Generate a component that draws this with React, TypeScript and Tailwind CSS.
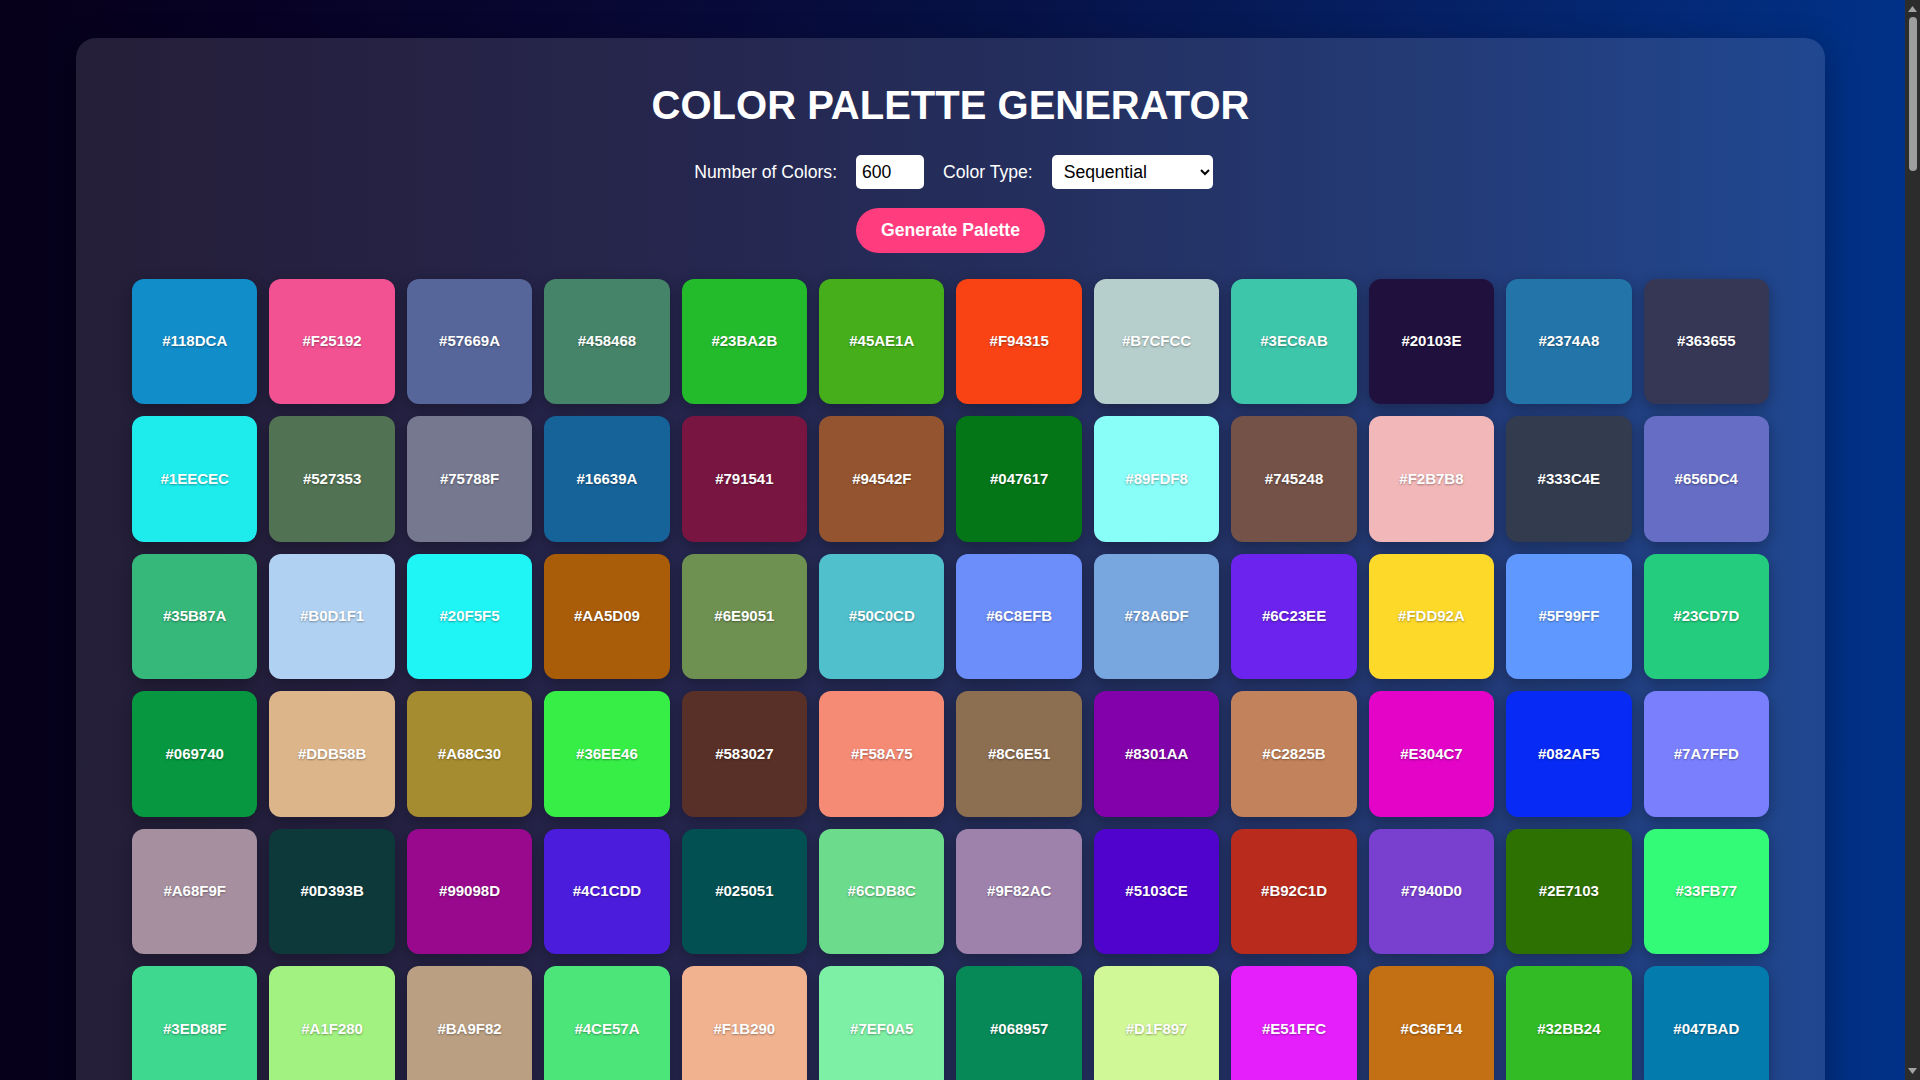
import { useState } from "react";

const shown = [
  "118DCA", "F25192", "57669A", "458468", "23BA2B", "45AE1A", "F94315", "B7CFCC", "3EC6AB", "20103E", "2374A8", "363655",
  "1EECEC", "527353", "75788F", "16639A", "791541", "94542F", "047617", "89FDF8", "745248", "F2B7B8", "333C4E", "656DC4",
  "35B87A", "B0D1F1", "20F5F5", "AA5D09", "6E9051", "50C0CD", "6C8EFB", "78A6DF", "6C23EE", "FDD92A", "5F99FF", "23CD7D",
  "069740", "DDB58B", "A68C30", "36EE46", "583027", "F58A75", "8C6E51", "8301AA", "C2825B", "E304C7", "082AF5", "7A7FFD",
  "A68F9F", "0D393B", "99098D", "4C1CDD", "025051", "6CDB8C", "9F82AC", "5103CE", "B92C1D", "7940D0", "2E7103", "33FB77",
  "3ED88F", "A1F280", "BA9F82", "4CE57A", "F1B290", "7EF0A5", "068957", "D1F897", "E51FFC", "C36F14", "32BB24", "047BAD",
];

// fixed seed so the rest of the palette is the same every render
function makePalette(count: number) {
  let seed = 91823;
  const rand = () => {
    seed = (seed * 1103515245 + 12345) % 2147483648;
    return seed / 2147483648;
  };
  const out = shown.map((h) => "#" + h);
  while (out.length < count) {
    const v = Math.floor(rand() * 0xffffff);
    out.push("#" + v.toString(16).toUpperCase().padStart(6, "0"));
  }
  return out.slice(0, count);
}

export default function App() {
  const [count, setCount] = useState("600");
  const [type, setType] = useState("sequential");
  const [colors, setColors] = useState<string[]>(() => makePalette(600));

  const generate = () => {
    const n = parseInt(count, 10);
    setColors(makePalette(isNaN(n) ? 600 : n));
  };

  return (
    <div className="flex h-screen bg-linear-to-r from-[#06001a] via-[#061043] to-[#003289] font-['Liberation_Sans',Arial,sans-serif]">
      <div className="min-w-0 flex-1 overflow-y-auto [scrollbar-width:none]">
        <div className="pt-[38px] pb-[38px] pl-[76px] pr-[80px]">
          <div className="rounded-[20px] bg-white/12 px-[56px] pt-[45px] pb-[56px] shadow-[0_8px_32px_rgba(0,0,0,0.25)]">
            <h1 className="text-center text-[40px] font-bold leading-[45px] text-white">
              COLOR PALETTE GENERATOR
            </h1>

            <div className="mt-[27px] flex items-center justify-center gap-[19px] pl-[6px] text-[17.6px] text-white">
              <label htmlFor="num">Number of Colors:</label>
              <input
                id="num"
                type="text"
                value={count}
                onChange={(e) => setCount(e.target.value)}
                className="h-[34px] w-[68px] rounded-[5px] bg-white pl-[6px] text-[17.6px] text-black outline-none"
              />
              <label htmlFor="type">Color Type:</label>
              <select
                id="type"
                value={type}
                onChange={(e) => setType(e.target.value)}
                className="h-[34px] w-[161px] rounded-[5px] bg-white pl-[8px] pr-[4px] text-[17.6px] text-black outline-none"
              >
                <option value="sequential">Sequential</option>
                <option value="random">Random</option>
                <option value="analogous">Analogous</option>
                <option value="complementary">Complementary</option>
              </select>
            </div>

            <div className="mt-[19px] flex justify-center">
              <button
                onClick={generate}
                className="h-[45px] w-[189px] rounded-full bg-[#ff3c7e] text-[17.6px] font-bold text-white"
              >
                Generate Palette
              </button>
            </div>

            <div className="mt-[26px] grid grid-cols-12 gap-3">
              {colors.map((c, i) => (
                <div
                  key={i}
                  className="flex aspect-square items-center justify-center rounded-xl text-[15px] font-bold text-white shadow-[0_4px_14px_rgba(0,0,0,0.3)] [text-shadow:0_1px_2px_rgba(0,0,0,0.35)]"
                  style={{ backgroundColor: c }}
                >
                  {c}
                </div>
              ))}
            </div>
          </div>
        </div>
      </div>

      {/* scrollbar strip */}
      <div className="flex w-[15px] shrink-0 flex-col items-center bg-[#2c2c2c]">
        <svg width="9" height="6" viewBox="0 0 9 6" className="mt-[6px]">
          <path d="M4.5 0 L9 6 L0 6 Z" fill="#a3a3a3" />
        </svg>
        <div className="mt-[5px] h-[154px] w-[8px] rounded-full bg-[#9e9e9e]" />
        <div className="flex-1" />
        <svg width="9" height="6" viewBox="0 0 9 6" className="mb-[6px]">
          <path d="M0 0 L9 0 L4.5 6 Z" fill="#a3a3a3" />
        </svg>
      </div>
    </div>
  );
}
